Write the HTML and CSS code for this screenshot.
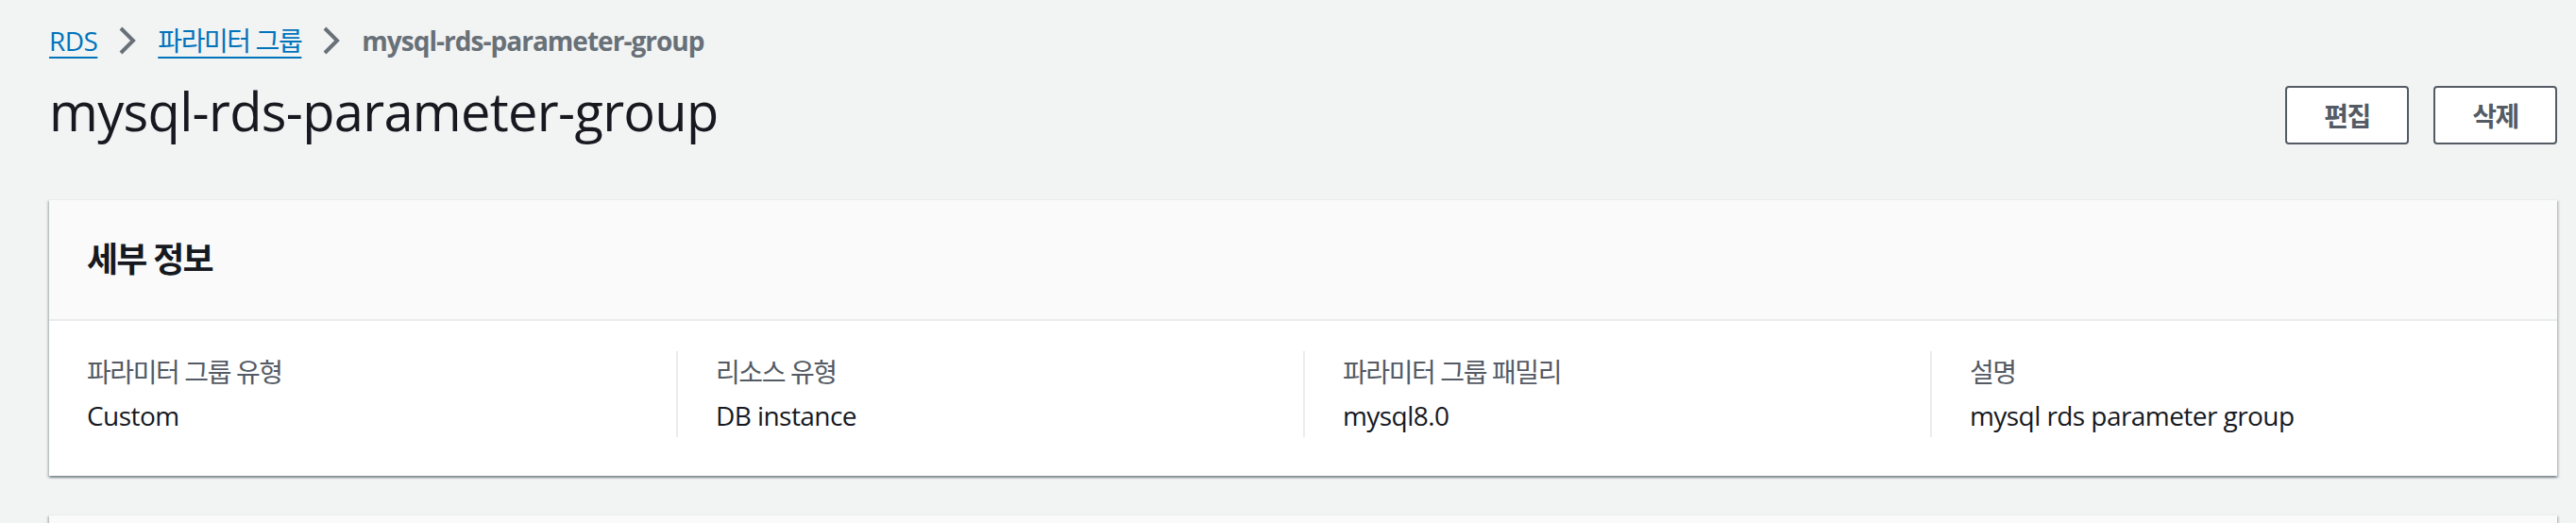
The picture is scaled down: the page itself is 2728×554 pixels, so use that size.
FILE: index.html
```html
<!DOCTYPE html>
<html lang="ko">
<head>
<meta charset="utf-8">
<title>mysql-rds-parameter-group</title>
<link rel="stylesheet" href="styles.css">
</head>
<body>
<div class="page">
  <nav class="breadcrumbs">
    <a class="crumb-link" href="#">RDS</a>
    <svg class="chev" width="20" height="30" viewBox="0 0 20 30"><polyline points="3,2 16,15 3,28" fill="none" stroke="#687078" stroke-width="4"/></svg>
    <a class="crumb-link ko" href="#">파라미터 그룹</a>
    <svg class="chev" width="20" height="30" viewBox="0 0 20 30"><polyline points="3,2 16,15 3,28" fill="none" stroke="#687078" stroke-width="4"/></svg>
    <span class="crumb-current">mysql-rds-parameter-group</span>
  </nav>

  <header class="page-header">
    <h1 class="title">mysql-rds-parameter-group</h1>
    <div class="actions">
      <button class="btn ko">편집</button>
      <button class="btn ko">삭제</button>
    </div>
  </header>

  <section class="card">
    <div class="card-header">
      <h2 class="card-title ko">세부 정보</h2>
    </div>
    <div class="card-body">
      <div class="col">
        <div class="label ko">파라미터 그룹 유형</div>
        <div class="value">Custom</div>
      </div>
      <div class="col">
        <div class="label ko">리소스 유형</div>
        <div class="value">DB instance</div>
      </div>
      <div class="col">
        <div class="label ko">파라미터 그룹 패밀리</div>
        <div class="value">mysql8.0</div>
      </div>
      <div class="col">
        <div class="label ko">설명</div>
        <div class="value">mysql rds parameter group</div>
      </div>
    </div>
  </section>

  <section class="card card-next">
    <div class="card-header"></div>
  </section>
</div>
</body>
</html>
```

FILE: styles.css
```css
html, body {
  margin: 0;
  padding: 0;
  background: #f2f3f3;
}
body {
  font-family: "Open Sans", "Noto Sans CJK KR", sans-serif;
  color: #16191f;
  font-size: 28px;
  letter-spacing: -0.02em;
}
.ko {
  letter-spacing: -0.05em;
}
.page {
  padding: 23px 20px 0 52px;
}
.breadcrumbs {
  display: flex;
  align-items: center;
  height: 40px;
  line-height: 40px;
  font-size: 28px;
}
.crumb-link {
  color: #0073bb;
  text-decoration: underline;
  text-decoration-thickness: 2px;
  text-underline-offset: 6px;
}
.chev {
  margin: 0 22px 0 22px;
  flex: none;
}
.crumb-current {
  color: #687078;
  font-weight: 700;
  letter-spacing: -0.035em;
}
.page-header {
  display: flex;
  justify-content: space-between;
  align-items: flex-start;
  margin-top: 22px;
}
.title {
  margin: 0;
  font-size: 56px;
  line-height: 64px;
  font-weight: 400;
  letter-spacing: -0.012em;
  color: #16191f;
}
.actions {
  display: flex;
  gap: 26px;
  margin-top: 6px;
}
.btn {
  box-sizing: border-box;
  height: 62px;
  padding: 0 36px;
  min-width: 131px;
  background: #ffffff;
  border: 2px solid #545b64;
  border-radius: 4px;
  color: #545b64;
  font-family: "Open Sans", "Noto Sans CJK KR", sans-serif;
  font-size: 28px;
  font-weight: 700;
}
.card {
  margin-top: 58px;
  background: #ffffff;
  border-top: 1px solid #eaeded;
  box-shadow: 0 2px 2px 0 rgba(0, 28, 36, 0.3), 2px 2px 2px 0 rgba(0, 28, 36, 0.15), -2px 2px 2px 0 rgba(0, 28, 36, 0.15);
}
.card-header {
  box-sizing: border-box;
  height: 128px;
  display: flex;
  align-items: center;
  padding: 0 40px;
  background: #fafafa;
  border-bottom: 2px solid #eaeded;
}
.card-title {
  margin: 0;
  font-size: 36px;
  font-weight: 700;
  line-height: 44px;
}
.card-body {
  display: grid;
  grid-template-columns: repeat(4, 1fr);
  padding: 32px 0 41px;
}
.col {
  padding: 2px 40px 3px;
}
.col + .col {
  border-left: 2px solid #eaeded;
}
.label {
  color: #545b64;
  line-height: 40px;
  margin-bottom: 6px;
}
.value {
  line-height: 40px;
}
.card-next {
  margin-top: 41px;
}
```
